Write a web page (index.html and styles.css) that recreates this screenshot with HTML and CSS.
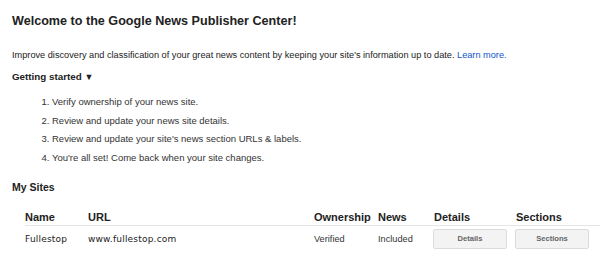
FILE: index.html
```html
<!DOCTYPE html>
<html>
<head>
<meta charset="utf-8">
<link rel="stylesheet" href="styles.css">
</head>
<body>
<div class="page">
  <h1 class="title">Welcome to the Google News Publisher Center!</h1>
  <p class="intro">Improve discovery and classification of your great news content by keeping your site's information up to date. <a class="link" href="#">Learn more.</a></p>
  <h2 class="started">Getting started <span class="tri">&#9660;</span></h2>
  <ol class="steps">
    <li>Verify ownership of your news site.</li>
    <li>Review and update your news site details.</li>
    <li>Review and update your site's news section URLs &amp; labels.</li>
    <li>You're all set! Come back when your site changes.</li>
  </ol>
  <h2 class="mysites">My Sites</h2>
  <div class="table">
    <div class="row head">
      <div class="c-name">Name</div>
      <div class="c-url">URL</div>
      <div class="c-own">Ownership</div>
      <div class="c-news">News</div>
      <div class="c-det">Details</div>
      <div class="c-sec">Sections</div>
    </div>
    <div class="row body">
      <div class="c-name site">Fullestop</div>
      <div class="c-url site">www.fullestop.com</div>
      <div class="c-own">Verified</div>
      <div class="c-news">Included</div>
      <div class="c-det"><button class="btn">Details</button></div>
      <div class="c-sec"><button class="btn">Sections</button></div>
    </div>
  </div>
</div>
</body>
</html>
```
FILE: styles.css
```css
html, body { margin: 0; padding: 0; background: #fff; }
body { font-family: "Liberation Sans", Arial, sans-serif; color: #222; overflow: hidden; width: 600px; }
.page { padding: 12px 0 0 12px; }
.title { font-size: 12.6px; font-weight: bold; margin: 0; line-height: 18px; color: #222; }
.intro { font-size: 9.2px; margin: 18px 0 0 0; line-height: 14px; color: #222; }
.link { color: #1155cc; text-decoration: none; }
.started { font-size: 9.8px; font-weight: bold; margin: 8px 0 0 0; line-height: 14px; }
.tri { font-size: 9px; }
.steps { margin: 11px 0 0 0; padding: 0 0 0 40px; font-size: 9.5px; line-height: 13px; color: #333; }
.steps li { margin-bottom: 5.6px; padding-left: 0; }
.mysites { font-size: 10.5px; font-weight: bold; margin: 16px 0 0 0; line-height: 14px; }
.table { margin: 9px 0 0 13px; }
.row { display: flex; align-items: center; }
.head { font-size: 11px; font-weight: bold; height: 20px; border-bottom: 1px solid #e5e5e5; align-items: flex-end; padding-bottom: 2px; }
.body { height: 26px; font-size: 9.2px; color: #333; }
.c-name { width: 63px; }
.c-url { width: 226px; }
.c-own { width: 64px; }
.c-news { width: 56px; }
.c-det { width: 82px; }
.c-sec { width: 80px; }
.site { font-family: "DejaVu Sans", Verdana, sans-serif; font-size: 9px; letter-spacing: 0.2px; color: #222; }
.btn { width: 74px; height: 20px; border: 1px solid #dcdcdc; border-radius: 2px; background: #f3f3f3; font-family: "Liberation Sans", Arial, sans-serif; font-size: 7.6px; font-weight: bold; color: #666; padding: 0; margin-left: -1px; }
```
